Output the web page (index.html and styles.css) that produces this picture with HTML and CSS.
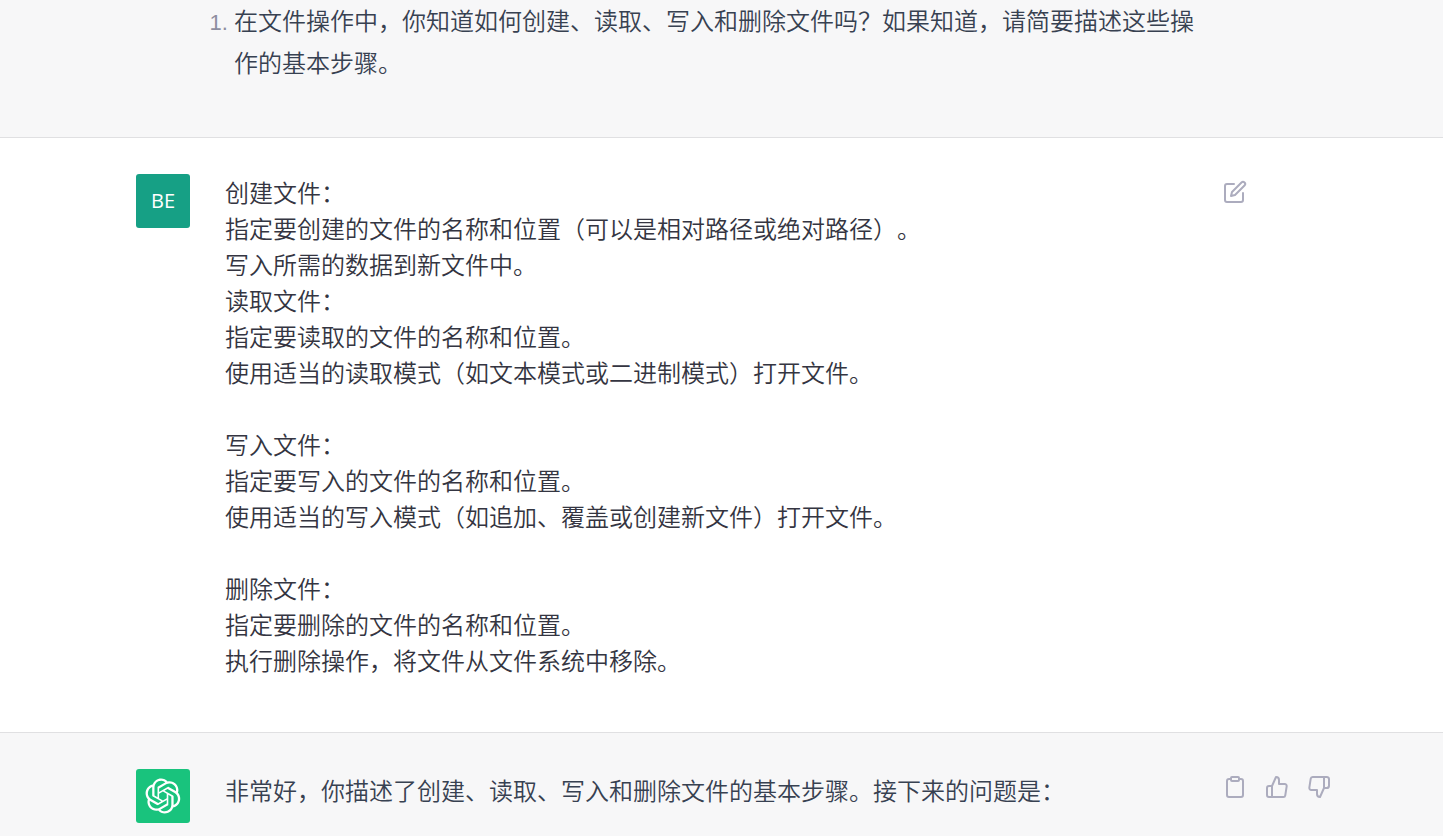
FILE: index.html
```html
<!DOCTYPE html>
<html lang="zh-CN">
<head>
    <meta charset="UTF-8">
    <meta name="viewport" content="width=device-width, initial-scale=1.0">
    <title>ChatGPT</title>
    <link rel="stylesheet" href="styles.css">
</head>
<body>
    <main class="chat">
        <section class="message assistant continued">
            <div class="message-inner">
                <div class="avatar-space"></div>
                <div class="content">
                    <ol>
                        <li>在文件操作中，你知道如何创建、读取、写入和删除文件吗？如果知道，请简要描述这些操作的基本步骤。</li>
                    </ol>
                </div>
                <div class="actions"></div>
            </div>
        </section>

        <section class="message user">
            <div class="message-inner">
                <div class="avatar">BE</div>
                <div class="content">创建文件：
指定要创建的文件的名称和位置（可以是相对路径或绝对路径）。
写入所需的数据到新文件中。
读取文件：
指定要读取的文件的名称和位置。
使用适当的读取模式（如文本模式或二进制模式）打开文件。

写入文件：
指定要写入的文件的名称和位置。
使用适当的写入模式（如追加、覆盖或创建新文件）打开文件。

删除文件：
指定要删除的文件的名称和位置。
执行删除操作，将文件从文件系统中移除。</div>
                <div class="actions">
                    <button type="button" aria-label="编辑">
                        <svg viewBox="0 0 24 24"><path d="M11 4H4a2 2 0 0 0-2 2v14a2 2 0 0 0 2 2h14a2 2 0 0 0 2-2v-7"/><path d="M18.5 2.5a2.121 2.121 0 0 1 3 3L12 15l-4 1 1-4 9.500-9.500z"/></svg>
                    </button>
                </div>
            </div>
        </section>

        <section class="message assistant">
            <div class="message-inner">
                <div class="avatar">
                    <svg class="logo" viewBox="0 0 41 41"><path d="M37.532 16.8707C37.9808 15.5241 38.1363 14.0974 37.9886 12.6859C37.8409 11.2744 37.3934 9.91076 36.676 8.68622C35.6126 6.83404 33.9882 5.3676 32.0373 4.4985C30.0864 3.62941 27.9098 3.40259 25.8215 3.85078C24.8796 2.7893 23.7219 1.94125 22.4257 1.36341C21.1295 0.785575 19.7249 0.491269 18.3058 0.500197C16.1708 0.495044 14.0893 1.16803 12.3614 2.42214C10.6335 3.67624 9.34853 5.44666 8.6917 7.47815C7.30085 7.76286 5.98686 8.3414 4.8377 9.17505C3.68854 10.0087 2.73073 11.0782 2.02839 12.312C0.956464 14.1591 0.498905 16.2988 0.721698 18.4228C0.944492 20.5467 1.83612 22.5449 3.268 24.1293C2.81966 25.4759 2.66413 26.9026 2.81182 28.3141C2.95951 29.7256 3.40701 31.0892 4.12437 32.3138C5.18791 34.1659 6.8123 35.6322 8.76321 36.5013C10.7141 37.3704 12.8907 37.5973 14.9789 37.1492C15.9208 38.2107 17.0786 39.0587 18.3747 39.6366C19.6709 40.2144 21.0755 40.5087 22.4946 40.4998C24.6307 40.5054 26.7133 39.8321 28.4418 38.5772C30.1704 37.3223 31.4556 35.5506 32.1119 33.5179C33.5027 33.2332 34.8167 32.6547 35.9659 31.821C37.115 30.9874 38.0728 29.9178 38.7752 28.684C39.8458 26.8371 40.3023 24.6979 40.0789 22.5748C39.8556 20.4517 38.9639 18.4544 37.532 16.8707ZM22.4978 37.8849C20.7443 37.8874 19.0459 37.2733 17.6994 36.1501C17.7601 36.117 17.8666 36.0586 17.936 36.0161L25.9004 31.4156C26.1003 31.3019 26.2663 31.137 26.3813 30.9378C26.4964 30.7386 26.5563 30.5124 26.5549 30.2825V19.0542L29.9213 20.998C29.9389 21.0068 29.9541 21.0198 29.9656 21.0359C29.977 21.052 29.9842 21.0707 29.9867 21.0902V30.3889C29.9842 32.375 29.1946 34.2791 27.7909 35.6841C26.3872 37.0892 24.4838 37.8806 22.4978 37.8849ZM6.39227 31.0064C5.51397 29.4888 5.19742 27.7107 5.49804 25.9832C5.55718 26.0187 5.66048 26.0818 5.73461 26.1244L13.699 30.7248C13.8975 30.8408 14.1233 30.902 14.3532 30.902C14.583 30.902 14.8088 30.8408 15.0073 30.7248L24.731 25.1103V28.9979C24.7321 29.0177 24.7283 29.0376 24.7199 29.0556C24.7115 29.0736 24.6988 29.0893 24.6829 29.1012L16.6317 33.7497C14.9096 34.7416 12.8643 35.0097 10.9447 34.4954C9.02506 33.9811 7.38785 32.7263 6.39227 31.0064ZM4.29707 13.6194C5.17156 12.0998 6.55279 10.9364 8.19885 10.3327C8.19885 10.4013 8.19491 10.5228 8.19491 10.6071V19.808C8.19351 20.0378 8.25334 20.2638 8.36823 20.4629C8.48312 20.6619 8.64893 20.8267 8.84863 20.9404L18.5723 26.5542L15.206 28.4979C15.1894 28.5089 15.1703 28.5155 15.1505 28.5173C15.1307 28.5191 15.1107 28.516 15.0924 28.5082L7.04046 23.8557C5.32135 22.8601 4.06716 21.2235 3.55289 19.3046C3.03862 17.3858 3.30624 15.3413 4.29707 13.6194ZM31.955 20.0556L22.2312 14.4411L25.5976 12.4981C25.6142 12.4872 25.6333 12.4805 25.6531 12.4787C25.6729 12.4769 25.6928 12.4801 25.7111 12.4879L33.7631 17.1364C34.9967 17.849 36.0017 18.8982 36.6606 20.1613C37.3194 21.4244 37.6047 22.849 37.4832 24.2684C37.3617 25.6878 36.8382 27.0432 35.9743 28.1759C35.1103 29.3086 33.9415 30.1717 32.6047 30.6641C32.6047 30.5947 32.6047 30.4733 32.6047 30.3889V21.188C32.6066 20.9586 32.5474 20.7328 32.4332 20.5338C32.319 20.3348 32.154 20.1698 31.955 20.0556ZM35.3055 15.0128C35.2464 14.9765 35.1431 14.9142 35.069 14.8717L27.1045 10.2712C26.906 10.1554 26.6803 10.0943 26.4504 10.0943C26.2206 10.0943 25.9948 10.1554 25.7963 10.2712L16.0726 15.8858V11.9982C16.0715 11.9783 16.0753 11.9585 16.0837 11.9405C16.0921 11.9225 16.1048 11.9068 16.1207 11.8949L24.1719 7.25025C25.4053 6.53903 26.8158 6.19376 28.2383 6.25482C29.6608 6.31589 31.0364 6.78077 32.2044 7.59508C33.3723 8.40939 34.2842 9.53945 34.8334 10.8531C35.3826 12.1667 35.5464 13.6095 35.3055 15.0128ZM14.2424 21.9419L10.8752 19.9981C10.8576 19.9893 10.8423 19.9763 10.8309 19.9602C10.8195 19.9441 10.8122 19.9254 10.8098 19.9058V10.6071C10.8107 9.18295 11.2173 7.78848 11.9819 6.58696C12.7466 5.38544 13.8377 4.42659 15.1275 3.82264C16.4173 3.21869 17.8524 2.99464 19.2649 3.1767C20.6775 3.35876 22.0089 3.93941 23.1034 4.85067C23.0427 4.88379 22.937 4.94215 22.8668 4.98473L14.9024 9.58517C14.7025 9.69878 14.5366 9.86356 14.4215 10.0626C14.3065 10.2616 14.2466 10.4877 14.2479 10.7175L14.2424 21.9419ZM16.071 17.9991L20.4018 15.4978L24.7325 17.9975V22.9985L20.4018 25.4983L16.071 22.9985V17.9991Z"/></svg>
                </div>
                <div class="content">
                    <p>非常好，你描述了创建、读取、写入和删除文件的基本步骤。接下来的问题是：</p>
                </div>
                <div class="actions">
                    <button type="button" aria-label="复制">
                        <svg viewBox="0 0 24 24"><path d="M16 4h2a2 2 0 0 1 2 2v14a2 2 0 0 1-2 2H6a2 2 0 0 1-2-2V6a2 2 0 0 1 2-2h2"/><rect x="8" y="2" width="8" height="4" rx="1" ry="1"/></svg>
                    </button>
                    <button type="button" aria-label="赞">
                        <svg viewBox="0 0 24 24"><path d="M14 9V5a3 3 0 0 0-3-3l-4 9v11h11.280a2 2 0 0 0 2-1.700l1.380-9a2 2 0 0 0-2-2.300zM7 22H4a2 2 0 0 1-2-2v-7a2 2 0 0 1 2-2h3"/></svg>
                    </button>
                    <button type="button" aria-label="踩">
                        <svg viewBox="0 0 24 24"><path d="M10 15v4a3 3 0 0 0 3 3l4-9V2H5.720a2 2 0 0 0-2 1.700l-1.380 9a2 2 0 0 0 2 2.300zm7-13h2.670A2.310 2.310 0 0 1 22 4v7a2.310 2.310 0 0 1-2.330 2H17"/></svg>
                    </button>
                </div>
            </div>
        </section>
    </main>
</body>
</html>
```
FILE: styles.css
```css
* {
    margin: 0;
    padding: 0;
    box-sizing: border-box;
}

body {
    background-color: #f7f7f8;
    font-family: "Liberation Sans", "Noto Sans CJK SC", sans-serif;
    font-size: 24px;
    font-weight: 350;
    text-spacing-trim: space-all;
}

.chat {
    height: 100vh;
    overflow: hidden;
}

.message {
    padding: 38px 24px 52px;
    border-bottom: 1px solid #e0e0e2;
}

.message-inner {
    display: flex;
    max-width: 1171px;
    margin: 0 auto;
}

.assistant {
    background-color: #f7f7f8;
    color: #374151;
    line-height: 42px;
}

.user {
    background-color: white;
    color: #343541;
    line-height: 36px;
}

.continued {
    padding-top: 1px;
}

.user .content {
    white-space: pre-wrap;
}

.avatar,
.avatar-space {
    flex: none;
    width: 54px;
    margin-right: 35px;
}

.avatar {
    display: flex;
    align-items: center;
    justify-content: center;
    height: 54px;
    margin-top: -2px;
    border-radius: 3px;
    background-color: #19c37d;
    color: white;
    font-family: "Open Sans", sans-serif;
    font-size: 20px;
    font-weight: 400;
}

.user .avatar {
    background-color: #16a085;
}

.logo {
    width: 36px;
    height: 36px;
    fill: white;
}

.content {
    flex: 1;
    min-width: 0;
}

.content ol {
    padding-left: 9px;
}

.content li::marker {
    color: #8e8ea0;
    font-size: 22px;
    font-weight: 400;
}

.actions {
    display: flex;
    flex: none;
    gap: 18px;
    width: 84px;
    margin-left: 24px;
    padding-top: 4px;
}

.actions button {
    flex: none;
    width: 24px;
    height: 24px;
    border: none;
    background: none;
    cursor: pointer;
}

.actions svg {
    display: block;
    width: 24px;
    height: 24px;
    fill: none;
    stroke: #acacbe;
    stroke-width: 2;
    stroke-linecap: round;
    stroke-linejoin: round;
}
```
